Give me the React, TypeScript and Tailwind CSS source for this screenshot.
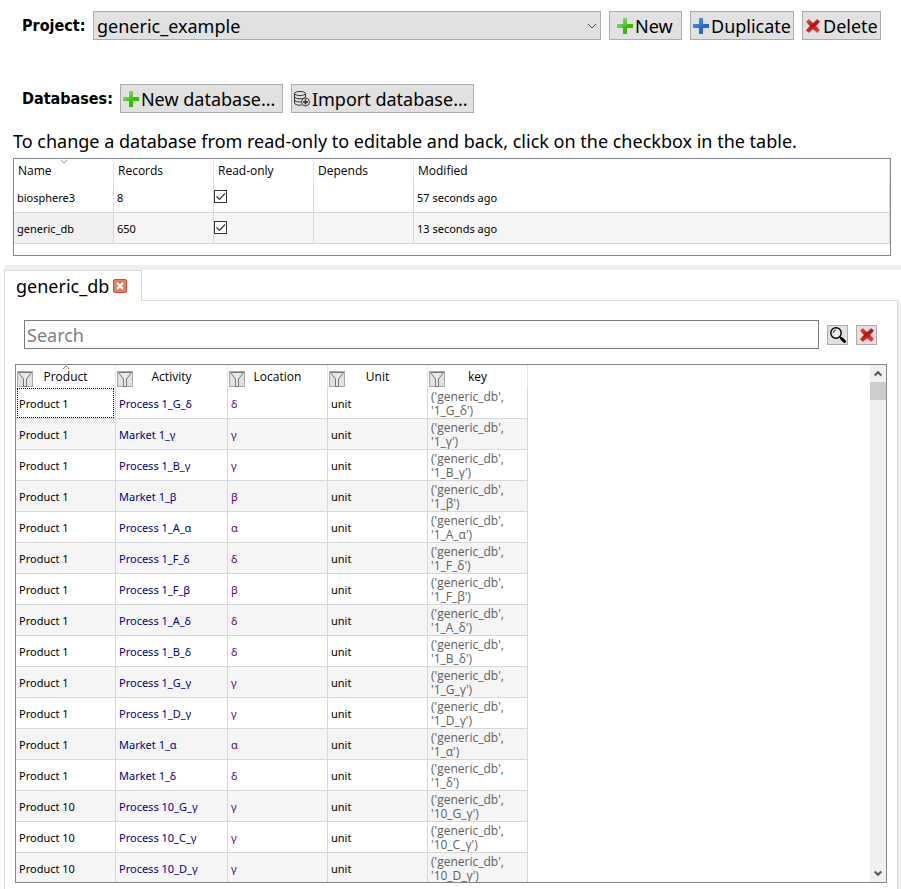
import type { ReactNode } from "react";

const PlusIcon = ({ id, from, to }: { id: string; from: string; to: string }) => (
  <svg className="size-4 shrink-0" viewBox="0 0 16 16" aria-hidden="true">
    <defs>
      <linearGradient id={id} x1="0" y1="0" x2="0.7" y2="0.8">
        <stop offset="0" stopColor={from} />
        <stop offset="0.8" stopColor={to} />
      </linearGradient>
    </defs>
    <path d="M6 0h4v6h6v4h-6v6H6v-6H0V6h6z" fill={`url(#${id})`} />
  </svg>
);

const CrossIcon = ({ id }: { id: string }) => (
  <svg className="size-4 shrink-0" viewBox="0 0 16 16" aria-hidden="true">
    <defs>
      <linearGradient id={id} x1="0.1" y1="0" x2="0.6" y2="1">
        <stop offset="0" stopColor="#de5050" />
        <stop offset="0.5" stopColor="#b90d0d" />
        <stop offset="1" stopColor="#f03a3a" />
      </linearGradient>
    </defs>
    <path
      d="M3.800 1.500 8 5.400 12.200 1.500 14.500 3.700 10.700 8 14.500 12.200 12.200 14.500 8 10.700 3.800 14.500 1.500 12.200 5.300 8 1.500 3.700z"
      fill={`url(#${id})`}
      stroke={`url(#${id})`}
      strokeWidth="0.800"
      strokeLinejoin="round"
    />
  </svg>
);

const DatabaseIcon = () => (
  <svg className="size-4 shrink-0" viewBox="0 0 16 16" fill="none" stroke="#222" strokeWidth="0.9" aria-hidden="true">
    <ellipse cx="6" cy="2.500" rx="5.500" ry="2" />
    <path d="M.5 2.500v9.500c0 1.200 2.400 2.200 5.500 2.200h1.500M11.500 2.500V6M.5 5.700c0 1.200 2.400 2.100 5.500 2.100 2.600 0 4.900-.6 5.500-1.800M.5 8.900C.5 10.100 2.900 11 6 11h1" />
    <circle cx="11.500" cy="11" r="4" fill="#e8e8e8" />
    <path d="M11.500 8.500v5M9 11h5" strokeWidth="1.600" />
  </svg>
);

const SearchIcon = () => (
  <svg className="size-4 shrink-0" viewBox="0 0 16 16" fill="none" stroke="#000" aria-hidden="true">
    <circle cx="6" cy="6" r="5.200" strokeWidth="1.400" fill="#eee" />
    <path d="M3.200 5.800A3 3 0 0 1 5.800 3.200" strokeWidth="0.900" />
    <path d="m9.800 9.800 1.800 1.800" strokeWidth="1.400" />
    <path d="m11.500 11.500 3 3" strokeWidth="3" strokeLinecap="round" />
  </svg>
);

const FilterIcon = () => (
  <svg className="size-4" viewBox="0 0 16 16" fill="none" aria-hidden="true">
    <rect x="0.500" y="0.500" width="15" height="15" fill="#e1e1e1" stroke="#a8a8a8" />
    <path d="M1.500 1.500h13L9.500 8v7.500h-3V8z" fill="#e9e9e9" stroke="#777" />
  </svg>
);

const Chevron = ({ up, className }: { up?: boolean; className: string }) => (
  <svg className={className} viewBox="0 0 10 6" fill="none" stroke="currentColor" aria-hidden="true">
    <path d={up ? "m1 5 4-4 4 4" : "m1 1 4 4 4-4"} />
  </svg>
);

const ScrollArrow = ({ up }: { up?: boolean }) => (
  <svg className="h-[7px] w-2" viewBox="0 0 8 7" fill="none" stroke="#555" strokeWidth="2" aria-hidden="true">
    <path d={up ? "m.7 5.500L4 2.200l3.300 3.300" : "m.7 1.500L4 4.800l3.300-3.300"} />
  </svg>
);

const Button = ({ children, className }: { children: ReactNode; className: string }) => (
  <button
    type="button"
    className={`flex h-[29px] shrink-0 items-center gap-0.5 border border-[#adadad] bg-[#e1e1e1] whitespace-nowrap ${className}`}
  >
    {children}
  </button>
);

const databases = [
  { name: "biosphere3", records: 8, modified: "57 seconds ago" },
  { name: "generic_db", records: 650, modified: "13 seconds ago" },
];

const activities = [
  ["Product 1", "Process", "1_G_δ"],
  ["Product 1", "Market", "1_γ"],
  ["Product 1", "Process", "1_B_γ"],
  ["Product 1", "Market", "1_β"],
  ["Product 1", "Process", "1_A_α"],
  ["Product 1", "Process", "1_F_δ"],
  ["Product 1", "Process", "1_F_β"],
  ["Product 1", "Process", "1_A_δ"],
  ["Product 1", "Process", "1_B_δ"],
  ["Product 1", "Process", "1_G_γ"],
  ["Product 1", "Process", "1_D_γ"],
  ["Product 1", "Market", "1_α"],
  ["Product 1", "Market", "1_δ"],
  ["Product 10", "Process", "10_G_γ"],
  ["Product 10", "Process", "10_C_γ"],
  ["Product 10", "Process", "10_D_γ"],
];

const columns = ["Product", "Activity", "Location", "Unit", "key"];

const labelStyle = "font-['DejaVu_Sans_Condensed','DejaVu_Sans',sans-serif] text-base font-bold";
const headStyle = "h-[23px] border-r border-[#e5e5e5] p-0 font-['Open_Sans',sans-serif] text-xs font-normal";
const cellStyle = "h-[31px] border-r border-b border-[#d8d8d8] pt-0.5 pr-0 pb-0 pl-[3px]";

function DatabaseTable() {
  return (
    <div className="mr-[10px] ml-[13px] border border-[#828790] pb-[11px]">
      <table className="w-full table-fixed border-separate border-spacing-0 text-left text-[11px]">
        <colgroup>
          <col className="w-[100px]" />
          <col className="w-[100px]" />
          <col className="w-[100px]" />
          <col className="w-[100px]" />
          <col />
        </colgroup>
        <thead>
          <tr>
            {["Name", "Records", "Read-only", "Depends", "Modified"].map((title) => (
              <th key={title} scope="col" className={`${headStyle} relative pl-1 leading-5`}>
                {title}
                {title === "Name" && <Chevron className="absolute top-0 left-[46px] h-[5px] w-2 text-[#777]" />}
              </th>
            ))}
          </tr>
        </thead>
        <tbody>
          {databases.map((db) => (
            <tr key={db.name} className="even:bg-[#f5f5f5]">
              <td className={`${cellStyle} ${db.name === "generic_db" ? "bg-[#f0f0f0]" : ""}`}>{db.name}</td>
              <td className={cellStyle}>{db.records}</td>
              <td className="h-[31px] border-r border-b border-[#d8d8d8] px-0 pt-0 pb-0.5">
                <label className="relative block size-[13px]">
                  <input
                    type="checkbox"
                    defaultChecked
                    aria-label={`${db.name} read-only`}
                    className="block size-[13px] appearance-none border border-[#333] bg-white"
                  />
                  <svg className="absolute inset-0 size-[13px]" viewBox="0 0 13 13" fill="none" stroke="#333" strokeWidth="1.200" aria-hidden="true">
                    <path d="m2.500 6.500 3 3 5.500-6" />
                  </svg>
                </label>
              </td>
              <td className={cellStyle} />
              <td className={cellStyle}>{db.modified}</td>
            </tr>
          ))}
        </tbody>
      </table>
    </div>
  );
}

function ActivityTable() {
  return (
    <div className="mx-[10px] mt-[15px] mb-[6px] flex min-h-0 flex-1 border border-[#828790]">
      <div className="min-w-0 flex-1 overflow-hidden">
        <table className="w-[512px] table-fixed border-separate border-spacing-0 text-left text-[11px]">
          <colgroup>
            <col className="w-[100px]" />
            <col className="w-[112px]" />
            <col className="w-[100px]" />
            <col className="w-[100px]" />
            <col className="w-[100px]" />
          </colgroup>
          <thead>
            <tr>
              {columns.map((title) => (
                <th key={title} scope="col" className={`${headStyle} relative`}>
                  <div className="grid h-[23px] grid-cols-[16px_1fr_16px] items-start px-px">
                    <button type="button" aria-label={`Filter ${title}`} className="mt-1.5 h-4">
                      <FilterIcon />
                    </button>
                    <span className="text-center leading-6">{title}</span>
                  </div>
                  {title === "Product" && (
                    <Chevron up className="absolute top-0 left-[46px] h-[5px] w-2 text-[#555]" />
                  )}
                </th>
              ))}
            </tr>
          </thead>
          <tbody>
            {activities.map(([product, kind, code], i) => (
              <tr key={code} className="even:bg-[#f5f5f5]">
                {i === 0 ? (
                  <td className="h-[31px] border-r border-b border-[#d8d8d8] px-px py-0">
                    <div className="flex h-[30px] items-center border border-dotted border-black pt-0.5 pl-px">
                      {product}
                    </div>
                  </td>
                ) : (
                  <td className={cellStyle}>{product}</td>
                )}
                <td className={cellStyle}>
                  <a href={`#${code}`} className="text-[#00007f]">
                    {kind} {code}
                  </a>
                </td>
                <td className={`${cellStyle} text-[#660080]`}>{code.slice(-1)}</td>
                <td className={cellStyle}>unit</td>
                <td className={`${cellStyle} font-['Open_Sans',sans-serif] text-xs leading-[14px] text-[#606060]`}>
                  ('generic_db',
                  <br />'{code}')
                </td>
              </tr>
            ))}
          </tbody>
        </table>
      </div>
      <div className="flex w-4 flex-col bg-[#f0f0f0]">
        <button type="button" aria-label="Scroll up" className="flex h-[17px] items-center justify-center">
          <ScrollArrow up />
        </button>
        <div className="h-[18px] bg-[#cdcdcd]" />
        <button type="button" aria-label="Scroll down" className="mt-auto flex h-[17px] items-center justify-center">
          <ScrollArrow />
        </button>
      </div>
    </div>
  );
}

export default function App() {
  return (
    <main className="flex h-screen flex-col overflow-hidden bg-white font-['Noto_Sans',sans-serif] text-lg leading-6 text-black">
      <div className="flex items-center gap-2 pt-[11px] pr-5 pl-[22px]">
        <div className="flex min-w-0 flex-1 items-center gap-[7px]">
          <label htmlFor="project" className={`${labelStyle} w-16`}>
            Project:
          </label>
          <div className="relative min-w-0 flex-1">
            <select
              id="project"
              className="block h-[29px] w-full appearance-none border border-[#adadad] bg-[#e1e1e1] pl-[3px] leading-6"
            >
              <option>generic_example</option>
            </select>
            <Chevron className="pointer-events-none absolute top-3 right-1 h-[6px] w-[10px] text-[#555]" />
          </div>
        </div>
        <Button className="w-[73px] pl-[7px]">
          <PlusIcon id="new" from="#b5dfa8" to="#2fbe00" />
          New
        </Button>
        <Button className="w-[104px] pl-0.5">
          <PlusIcon id="duplicate" from="#6a9bea" to="#2766d8" />
          Duplicate
        </Button>
        <Button className="w-[79px] pl-0.5">
          <CrossIcon id="delete" />
          Delete
        </Button>
      </div>

      <div className="mt-11 flex items-center gap-2 pl-[22px]">
        <div className="flex items-center gap-[7px]">
          <span className={labelStyle}>Databases:</span>
          <Button className="w-[163px] pl-0.5">
            <PlusIcon id="new-db" from="#b5dfa8" to="#2fbe00" />
            New database...
          </Button>
        </div>
        <Button className="w-[183px] pl-0.5">
          <DatabaseIcon />
          Import database...
        </Button>
      </div>

      <p className="pt-4 pb-[5px] pl-[13px]">
        To change a database from read-only to editable and back, click on the checkbox in the table.
      </p>

      <DatabaseTable />

      <div className="mt-[9px] ml-1 h-[5px] shrink-0 bg-[#efefef]" />

      <div className="mr-[3px] ml-1 flex shrink-0" role="tablist">
        <div className="flex h-[31px] w-[138px] items-center gap-1 border-x border-t border-[#d9d9d9] pl-[11px]">
          <button type="button" role="tab" aria-selected="true">
            generic_db
          </button>
          <button type="button" aria-label="Close tab">
            <svg className="size-[14px]" viewBox="0 0 14 14" aria-hidden="true">
              <rect x="0.500" y="0.500" width="13" height="13" rx="1.500" fill="#de8260" stroke="#d64530" />
              <path d="m4 4 6 6M10 4l-6 6" stroke="#fff" strokeWidth="2.200" />
            </svg>
          </button>
        </div>
        <div className="flex-1 border-b border-[#d9d9d9]" />
      </div>

      <div className="ml-1 flex min-h-0 flex-1">
        <section className="flex min-w-0 flex-1 flex-col border-x border-[#d9d9d9] pt-[19px]">
          <div className="flex items-center gap-2 pr-5 pl-[19px]">
            <input
              type="text"
              placeholder="Search"
              aria-label="Search"
              className="h-[29px] min-w-0 flex-1 border border-[#7a7a7a] px-[2px] placeholder:text-[#808080]"
            />
            <button
              type="button"
              aria-label="Run search"
              className="flex h-5 w-[21px] items-center justify-center border border-[#adadad] bg-[#e1e1e1]"
            >
              <SearchIcon />
            </button>
            <button
              type="button"
              aria-label="Clear search"
              className="flex h-5 w-[21px] items-center justify-center border border-[#adadad] bg-[#e1e1e1]"
            >
              <CrossIcon id="clear" />
            </button>
          </div>
          <ActivityTable />
        </section>
        <div className="w-[3px] bg-[#efefef]" />
      </div>
    </main>
  );
}
